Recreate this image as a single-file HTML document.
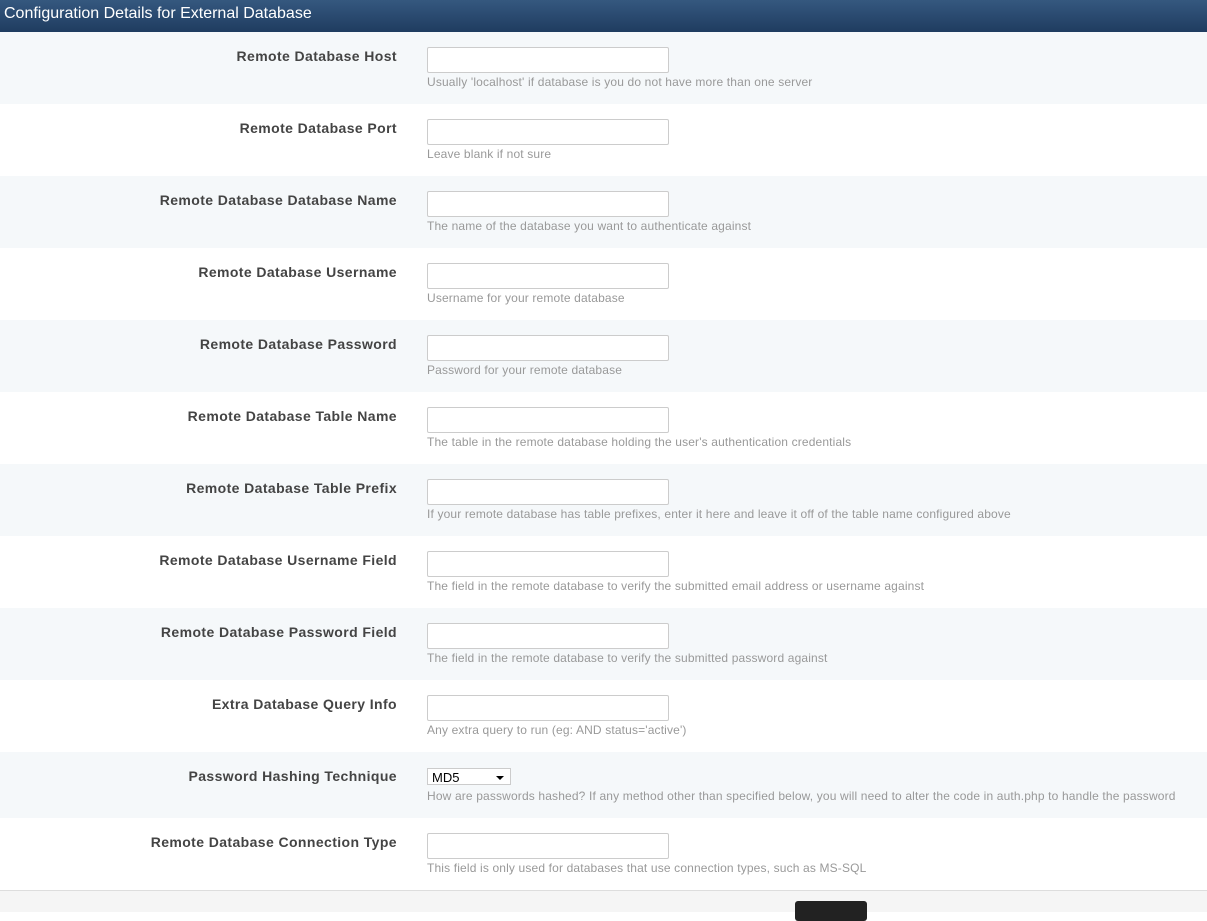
<!DOCTYPE html>
<html><head><style>
body{margin:0;width:1207px;height:911px;overflow:hidden;font-family:"Liberation Sans",Arial,sans-serif;background:#fff;position:relative}
.hd{height:32px;background:linear-gradient(#35587f,#1f3c60);color:#fff;font-size:16px;line-height:28px;padding-left:4px}
.row{position:relative;height:72px}
.row.o{background:#f5f8fa}
.lb{position:absolute;right:810px;top:16px;font-weight:bold;font-size:14px;color:#444;white-space:nowrap;letter-spacing:0.4px}
.in{position:absolute;left:427px;top:15px;width:240px;height:24px;border:1px solid #ccc;border-radius:2px;background:#fff}
.hp{position:absolute;left:427px;top:43px;font-size:12px;color:#999;white-space:nowrap;letter-spacing:0.15px}
.sel{position:absolute;left:427px;top:16px;height:17px;border:1px solid #ccc;background:#fff;font-size:13px;line-height:17px;padding-left:4px;box-sizing:border-box;width:84px}
.sel:after{content:"";position:absolute;right:6px;top:7px;border:4px solid transparent;border-top:4px solid #000;border-bottom:0}
.ft{position:absolute;left:0;top:890px;width:1207px;height:21px;background:#f5f5f5;border-top:1px solid #ddd}
.btn{position:absolute;left:795px;top:10px;width:72px;height:20px;background:#222;border-radius:3px}
</style></head><body>
<div class="hd">Configuration Details for External Database</div>
<div class="row o"><div class="lb">Remote Database Host</div><div class="in"></div><div class="hp">Usually 'localhost' if database is you do not have more than one server</div></div>
<div class="row"><div class="lb">Remote Database Port</div><div class="in"></div><div class="hp">Leave blank if not sure</div></div>
<div class="row o"><div class="lb">Remote Database Database Name</div><div class="in"></div><div class="hp">The name of the database you want to authenticate against</div></div>
<div class="row"><div class="lb">Remote Database Username</div><div class="in"></div><div class="hp">Username for your remote database</div></div>
<div class="row o"><div class="lb">Remote Database Password</div><div class="in"></div><div class="hp">Password for your remote database</div></div>
<div class="row"><div class="lb">Remote Database Table Name</div><div class="in"></div><div class="hp">The table in the remote database holding the user's authentication credentials</div></div>
<div class="row o"><div class="lb">Remote Database Table Prefix</div><div class="in"></div><div class="hp">If your remote database has table prefixes, enter it here and leave it off of the table name configured above</div></div>
<div class="row"><div class="lb">Remote Database Username Field</div><div class="in"></div><div class="hp">The field in the remote database to verify the submitted email address or username against</div></div>
<div class="row o"><div class="lb">Remote Database Password Field</div><div class="in"></div><div class="hp">The field in the remote database to verify the submitted password against</div></div>
<div class="row"><div class="lb">Extra Database Query Info</div><div class="in"></div><div class="hp">Any extra query to run (eg: AND status='active')</div></div>
<div class="row o" style="height:66px"><div class="lb">Password Hashing Technique</div><div class="sel">MD5</div><div class="hp" style="top:37px">How are passwords hashed? If any method other than specified below, you will need to alter the code in auth.php to handle the password</div></div>
<div class="row"><div class="lb">Remote Database Connection Type</div><div class="in"></div><div class="hp">This field is only used for databases that use connection types, such as MS-SQL</div></div>
<div class="ft"><div class="btn"></div></div>
</body></html>
